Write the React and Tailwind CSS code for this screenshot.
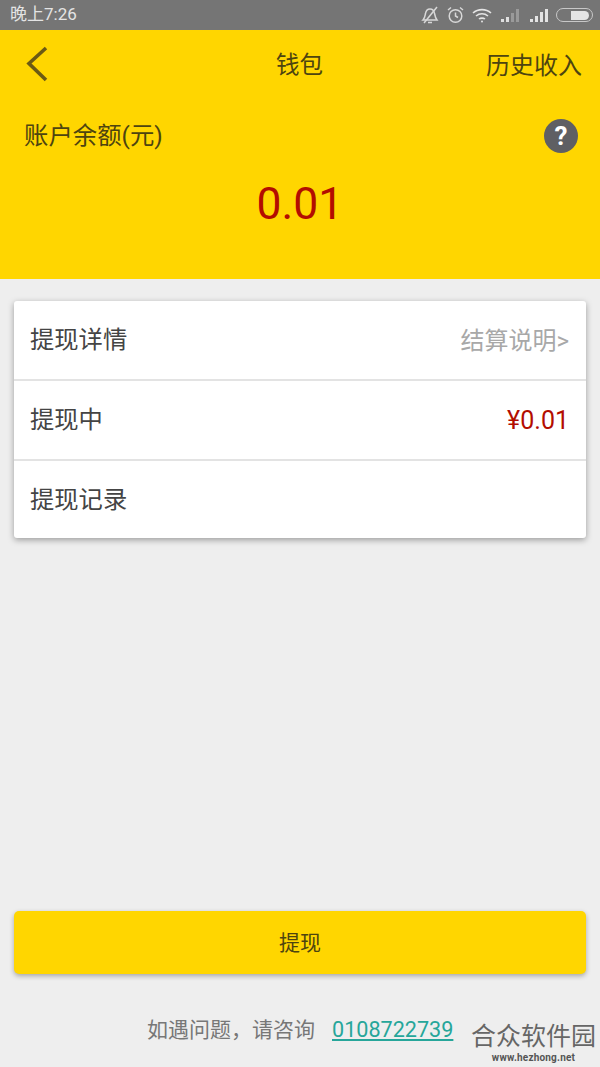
import React from 'react';

const font = { fontFamily: '"Roboto", "Noto Sans CJK SC", sans-serif' };

const StatusIcons = () => (
  <div className="flex items-center">
    {/* bell off */}
    <svg width="18" height="18" viewBox="0 0 18 18" fill="none" stroke="#d8d8d8" strokeWidth="1.5" className="mr-[8px]">
      <path d="M2 14 C4 12 4 10 4.5 7.5 C5 4.5 7 3 9 3 C11 3 13 4.5 13.5 7.5 C14 10 14.5 12 16 14 Z" />
      <path d="M7 16.5 h4" />
      <path d="M3 17 L16 1" />
    </svg>
    {/* alarm */}
    <svg width="17" height="18" viewBox="0 0 17 18" fill="none" stroke="#d8d8d8" strokeWidth="1.5" className="mr-[8px]">
      <circle cx="8.5" cy="10" r="6.3" />
      <path d="M8.5 6.5 V10 L11 11.5" />
      <path d="M1 4 L4 1.5 M16 4 L13 1.5" />
    </svg>
    {/* wifi */}
    <svg width="20" height="15" viewBox="0 0 20 15" fill="none" stroke="#e4e4e4" strokeWidth="1.6" className="mr-[8px]">
      <path d="M1 5 C6 0.5 14 0.5 19 5" />
      <path d="M4 8 C7.5 5 12.5 5 16 8" />
      <path d="M7 11 C8.5 9.8 11.5 9.8 13 11" />
      <circle cx="10" cy="13.5" r="1" fill="#e4e4e4" stroke="none" />
    </svg>
    {/* signal weak */}
    <svg width="20" height="14" viewBox="0 0 20 14" className="mr-[9px]">
      <path d="M1 11h3v3H1z M6 9h3v5H6z" fill="#e0e0e0" />
      <path d="M11 5h3v9h-3z M16 1h3v13h-3z" fill="#9a9a9a" />
    </svg>
    {/* signal full */}
    <svg width="20" height="14" viewBox="0 0 20 14" className="mr-[7px]">
      <path d="M1 11h3v3H1z M6 8h3v6H6z M11 4h3v10h-3z M16 1h3v13h-3z" fill="#e4e4e4" />
    </svg>
    {/* battery */}
    <div className="flex h-[14px] w-[37px] items-center justify-end rounded-full border border-[#c8c8c8] pr-[3px]">
      <div className="h-[9px] w-[18px] rounded-r-full bg-[#e4e4e4]" />
    </div>
  </div>
);

const Row = ({ title, right, border }) => (
  <div className={`flex items-center justify-between pt-[1px] pr-[17px] pl-4 ${border ? 'h-[80px] border-b-2 border-[#e3e3e3]' : 'h-[77px]'}`}>
    <span className="text-[24.3px] text-[#444444]">{title}</span>
    {right}
  </div>
);

const App = () => {
  return (
    <div className="relative flex h-[1067px] w-[600px] flex-col overflow-hidden bg-[#eeeeee]" style={font}>
      <div className="flex h-[30px] items-center justify-between bg-[#757575] pr-[7px] pl-[10px]">
        <span className="text-[17px] text-[#e4e4e4]">晚上7:26</span>
        <StatusIcons />
      </div>

      <div className="h-[249px] bg-[#ffd600] pr-[18px] pl-6">
        <div className="relative flex h-[68px] items-center justify-between pt-[3px]">
          <svg width="24" height="36" viewBox="0 0 24 36" fill="none" stroke="#6b5a14" strokeWidth="3.6" className="mt-[-3px] ml-[1px]">
            <path d="M21 2 L4 17.5 L21 34" />
          </svg>
          <span className="absolute left-[252px] text-[23.5px] text-[#4d4410]">钱包</span>
          <span className="text-[24px] text-[#4d4410]">历史收入</span>
        </div>
        <div className="mt-[20px] flex items-center justify-between pr-[4px]">
          <span className="text-[24.4px] text-[#4d4410]">账户余额(元)</span>
          <div className="flex h-[34px] w-[34px] items-center justify-center rounded-full bg-[#5f5f63] text-[26px] leading-none font-bold text-white">?</div>
        </div>
        <div className="mt-[27px] pr-[6px] text-center text-[44.5px] leading-none text-[#b30d00]">0.01</div>
      </div>

      <div className="mx-[14px] mt-[22px] rounded-[3px] bg-white shadow-[0_2px_6px_rgba(0,0,0,0.35)]">
        <Row title="提现详情" border right={<span className="text-[24px] text-[#a8a8a8]">结算说明&gt;</span>} />
        <Row title="提现中" border right={<span className="text-[25px] text-[#b30d00]">¥0.01</span>} />
        <Row title="提现记录" />
      </div>

      <div className="flex-1" />

      <button className="mx-[14px] h-[63px] rounded-[5px] bg-[#ffd600] pt-[3px] text-[21px] text-[#4d4410] shadow-[0_2px_5px_rgba(0,0,0,0.3)]">
        提现
      </button>

      <div className="mt-[42px] mb-[23px] flex items-center pl-[147px] text-[21px] leading-[28px]">
        <span className="text-[#777777]">如遇问题，请咨询</span>
        <span className="ml-[17px] text-[21.6px] text-[#26a69a] underline">0108722739</span>
      </div>

      {/* site watermark, sits over the page corner */}
      <div className="absolute right-[3px] bottom-[3px] flex w-[127px] flex-col items-center">
        <span className="text-[25px] leading-[30px] whitespace-nowrap text-[#666666]">合众软件园</span>
        <span className="text-[10px] leading-[12px] font-bold tracking-[0.2px] text-[#555555]">www.hezhong.net</span>
      </div>
    </div>
  );
};

export default App;
